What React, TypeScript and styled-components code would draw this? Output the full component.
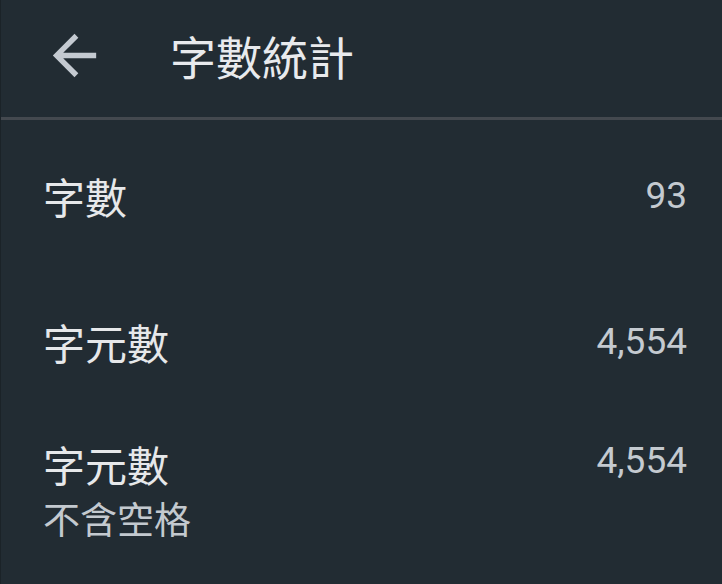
import React from "react";
import styled, { createGlobalStyle } from "styled-components";

const GlobalStyle = createGlobalStyle`
  html, body {
    margin: 0;
    padding: 0;
    background: #222c33;
  }
  body {
    font-family: "Noto Sans CJK TC", "Noto Sans", sans-serif;
  }
`;

const Screen = styled.div`
  width: 722px;
  height: 584px;
  box-sizing: border-box;
  background: #222c33;
  border-left: 1px solid #1b2328;
  overflow: hidden;
`;

const Toolbar = styled.header`
  display: flex;
  align-items: center;
  height: 120px;
  box-sizing: border-box;
  padding: 0 0 7px 41px;
  border-bottom: 3px solid #44494f;
  gap: 63px;
`;

const BackButton = styled.button`
  display: flex;
  align-items: center;
  justify-content: center;
  width: 65px;
  height: 65px;
  padding: 0;
  border: none;
  background: transparent;
  color: #c4cad1;
  cursor: pointer;
`;

const Title = styled.h1`
  margin: 0;
  font-size: 46px;
  font-weight: 400;
  line-height: 56px;
  color: #e8eaed;
`;

const List = styled.div`
  display: flex;
  flex-direction: column;
  padding: 48px 35px 0 42px;
`;

const Row = styled.div<{ $top?: number; $align?: string }>`
  display: flex;
  justify-content: space-between;
  align-items: ${p => p.$align || "center"};
  margin-top: ${p => p.$top || 0}px;
`;

const Labels = styled.div`
  display: flex;
  flex-direction: column;
`;

const Label = styled.span`
  font-size: 42px;
  line-height: 56px;
  color: #e6e8ea;
`;

const SubLabel = styled.span`
  margin-top: 2px;
  font-size: 37px;
  line-height: 48px;
  color: #c3c9cf;
`;

const Value = styled.span<{ $shift?: number }>`
  font-family: Roboto, "Liberation Sans", sans-serif;
  font-size: 37px;
  line-height: 56px;
  color: #c4cad0;
  margin-top: ${p => p.$shift || 0}px;
`;

function ArrowBack() {
  return (
    <svg width="65" height="65" viewBox="0 0 24 24" fill="currentColor">
      <path d="M20 11H7.83l5.59-5.59L12 4l-8 8 8 8 1.41-1.41L7.83 13H20v-2z" />
    </svg>
  );
}

export default function App() {
  return (
    <Screen>
      <GlobalStyle />
      <Toolbar>
        <BackButton aria-label="返回">
          <ArrowBack />
        </BackButton>
        <Title>字數統計</Title>
      </Toolbar>
      <List>
        <Row>
          <Label>字數</Label>
          <Value>93</Value>
        </Row>
        <Row $top={90}>
          <Label>字元數</Label>
          <Value>4,554</Value>
        </Row>
        <Row $top={66} $align="flex-start">
          <Labels>
            <Label>字元數</Label>
            <SubLabel>不含空格</SubLabel>
          </Labels>
          <Value $shift={-3}>4,554</Value>
        </Row>
      </List>
    </Screen>
  );
}
